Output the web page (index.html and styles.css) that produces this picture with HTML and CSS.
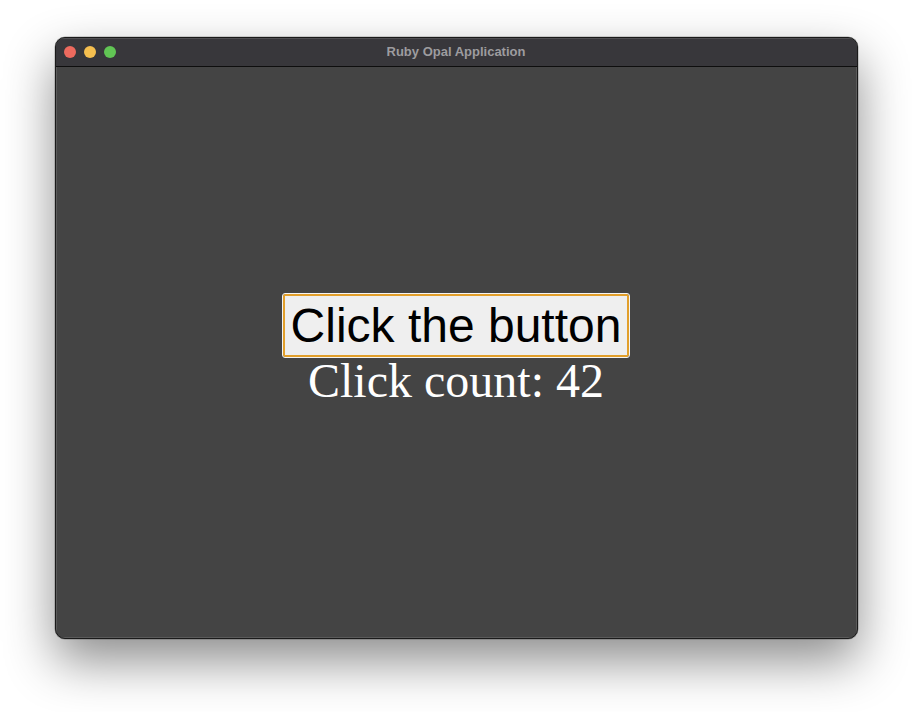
FILE: index.html
```html
<!DOCTYPE html>
<html>
<head>
<meta charset="utf-8">
<link rel="stylesheet" href="styles.css">
</head>
<body>
<div class="window">
  <div class="titlebar">
    <div class="lights">
      <span class="light red"></span>
      <span class="light yellow"></span>
      <span class="light green"></span>
    </div>
    <div class="title">Ruby Opal Application</div>
  </div>
  <div class="content">
    <button class="btn">Click the button</button>
    <div class="count">Click count: 42</div>
  </div>
</div>
</body>
</html>
```
FILE: styles.css
```css
html, body {
  margin: 0;
  padding: 0;
  background: #ffffff;
}
html {
  height: 100%;
}
body {
  min-height: 100%;
  box-sizing: border-box;
  padding-top: 37px;
  padding-bottom: 74px;
}
.window {
  width: 801px;
  height: 600px;
  margin: 0 auto;
  border: 1px solid #1a1a1a;
  border-radius: 10px;
  overflow: hidden;
  display: flex;
  flex-direction: column;
  background: #444444;
  box-shadow: 0 0 0 0.5px rgba(0,0,0,0.3), 0 22px 50px rgba(0,0,0,0.45);
}
.titlebar {
  height: 28px;
  flex: 0 0 28px;
  background: #38373b;
  border-bottom: 1px solid #0e0e0e;
  box-shadow: inset 0 1px 0 rgba(255,255,255,0.12);
  display: flex;
  align-items: center;
  justify-content: center;
  position: relative;
}
.lights {
  position: absolute;
  left: 8px;
  top: 8px;
  display: flex;
  gap: 8px;
}
.light {
  width: 12px;
  height: 12px;
  border-radius: 50%;
  display: block;
}
.red { background: #ed6a5e; }
.yellow { background: #f5bf4f; }
.green { background: #61c554; }
.title {
  font-family: "Liberation Sans", Arial, sans-serif;
  font-weight: bold;
  font-size: 13px;
  color: #9d9c9f;
  margin-top: -1px;
}
.content {
  flex: 1;
  display: flex;
  flex-direction: column;
  align-items: center;
  justify-content: center;
  box-shadow: inset 1px 0 0 rgba(255,255,255,0.12), inset -1px 0 0 rgba(255,255,255,0.12), inset 0 -1px 0 rgba(255,255,255,0.12);
}
.btn {
  font-family: "Liberation Sans", Arial, sans-serif;
  font-size: 48px;
  color: #000;
  background: #efefef;
  border: 2px solid #e29f2b;
  outline: 1px solid #f4f4f4;
  border-radius: 2px;
  padding: 2px 6px;
  margin: 0;
  line-height: 55px;
}
.count {
  font-family: "Liberation Serif", "Times New Roman", serif;
  font-size: 48px;
  color: #ffffff;
  line-height: 55px;
  margin-top: -4px;
  margin-bottom: 3px;
}
```
